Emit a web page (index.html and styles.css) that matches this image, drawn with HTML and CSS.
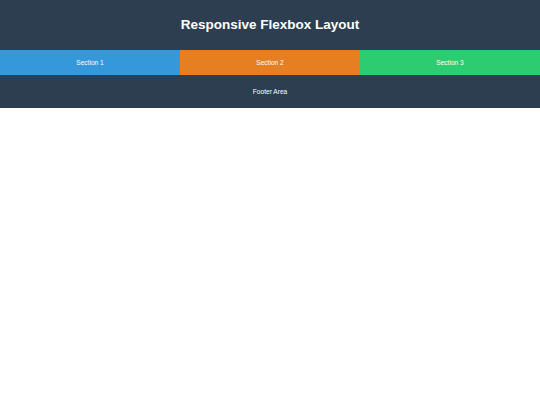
FILE: index.html
```html
<!DOCTYPE html>
<html lang="en">
<head>
<meta charset="utf-8">
<title>Responsive Flexbox Layout</title>
<link rel="stylesheet" href="styles.css">
</head>
<body>
  <header class="site-header">
    <h1 class="site-title">Responsive Flexbox Layout</h1>
  </header>
  <main class="sections">
    <div class="section section-blue">Section 1</div>
    <div class="section section-orange">Section 2</div>
    <div class="section section-green">Section 3</div>
  </main>
  <footer class="site-footer">Footer Area</footer>
</body>
</html>
```

FILE: styles.css
```css
* {
  box-sizing: border-box;
}

body {
  margin: 0;
  font-family: "Liberation Sans", Arial, sans-serif;
  background: #ffffff;
}

.site-header {
  background: #2c3e50;
  color: #ffffff;
  height: 50px;
  padding-bottom: 1px;
  display: flex;
  align-items: center;
  justify-content: center;
}

.site-title {
  margin: 0;
  font-size: 13.5px;
  font-weight: bold;
}

.sections {
  display: flex;
}

.section {
  flex: 1;
  height: 25px;
  display: flex;
  align-items: center;
  justify-content: center;
  color: #ffffff;
  font-size: 6.6px;
}

.section-blue {
  background: #3498db;
}

.section-orange {
  background: #e67e22;
}

.section-green {
  background: #2ecc71;
}

.site-footer {
  background: #2c3e50;
  color: #ffffff;
  height: 33px;
  display: flex;
  align-items: center;
  justify-content: center;
  font-size: 6.6px;
}
```
